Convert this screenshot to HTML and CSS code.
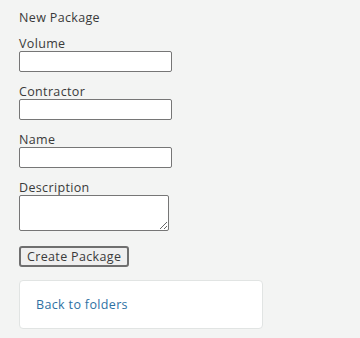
FILE: index.html
```html
<!DOCTYPE html>
<html lang="en">
<head>
    <meta charset="UTF-8">
    <title>New Package</title>
    <link rel="stylesheet" href="styles.css">
</head>
<body>
    <div class="page">
        <h2 class="title">New Package</h2>

        <form class="package-form">
            <div class="field">
                <label for="volume">Volume</label>
                <input type="text" id="volume">
            </div>
            <div class="field">
                <label for="contractor">Contractor</label>
                <input type="text" id="contractor">
            </div>
            <div class="field">
                <label for="name">Name</label>
                <input type="text" id="name">
            </div>
            <div class="field">
                <label for="description">Description</label>
                <textarea id="description"></textarea>
            </div>
            <button type="button" class="create-btn">Create Package</button>
        </form>

        <div class="card">
            <a href="#" class="back-link">Back to folders</a>
        </div>
    </div>
</body>
</html>
```

FILE: styles.css
```css
body {
    margin: 0;
    background-color: #f3f4f3;
    font-family: 'Open Sans', 'DejaVu Sans', sans-serif;
    color: #3a3a3a;
    letter-spacing: 0.35px;
}

.page {
    padding: 10px 19px;
    width: 244px;
}

.title {
    margin: 0 0 11px 0;
    font-size: 12.5px;
    font-weight: normal;
    line-height: 15px;
}

.package-form {
    display: flex;
    flex-direction: column;
    align-items: flex-start;
}

.field {
    display: flex;
    flex-direction: column;
    margin-bottom: 12px;
}

.field label {
    font-size: 12.5px;
    line-height: 15px;
}

.field input {
    box-sizing: border-box;
    width: 153px;
    height: 21px;
    margin: 0;
    border: 1px solid #767676;
    border-radius: 2px;
    background: #fff;
}

.field textarea {
    box-sizing: border-box;
    width: 150px;
    height: 36px;
    margin: 0;
    border: 1px solid #767676;
    border-radius: 2px;
    background: #fff;
}

.create-btn {
    margin-top: 3px;
    height: 21px;
    padding: 0 6px;
    font-family: 'Open Sans', 'DejaVu Sans', sans-serif;
    font-size: 12.5px;
    letter-spacing: 0.35px;
    color: #3a3a3a;
    background-color: #efefef;
    border: 2px solid #6f6f6f;
    border-radius: 3px;
}

.card {
    margin-top: 13px;
    padding: 16px 16px;
    line-height: 15px;
    font-size: 12.5px;
    background-color: #fff;
    border: 1px solid #e1e4e3;
    border-radius: 4px;
}

.back-link {
    color: #2e71a3;
    text-decoration: none;
}
```
